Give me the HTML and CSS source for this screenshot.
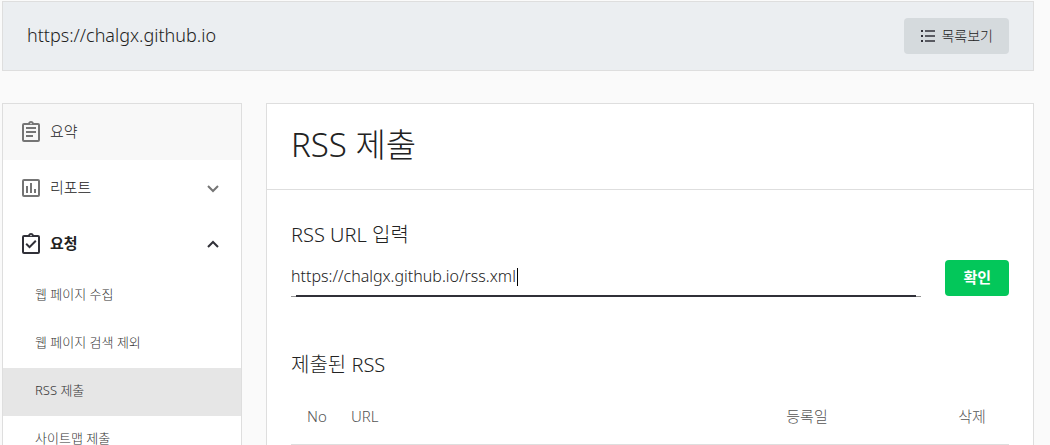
FILE: index.html
```html
<!DOCTYPE html>
<html lang="ko">
<head>
<meta charset="utf-8">
<meta name="viewport" content="width=device-width, initial-scale=1">
<title>RSS 제출</title>
<link rel="stylesheet" href="styles.css">
</head>
<body>
<div class="page">
  <header class="site-bar">
    <span class="site-name">https://chalgx.github.io</span>
    <button class="list-button" type="button">
      <svg class="list-icon" viewBox="0 0 16 16" aria-hidden="true"><path class="dots" d="M1 3h2M1 8h2M1 13h2"/><path d="M5 3h10M5 8h10M5 13h10"/></svg>
      <span>목록보기</span>
    </button>
  </header>
  <div class="columns">
    <nav class="sidebar" aria-label="메뉴">
      <a class="menu-item shaded" href="#summary">
        <svg class="menu-icon" viewBox="0 0 24 24" aria-hidden="true"><path d="M7 15h7v2H7zm0-4h10v2H7zm0-4h10v2H7zm12-4h-4.180C14.400 1.840 13.300 1 12 1s-2.400.840-2.820 2H5a2 2 0 0 0-2 2v15a2 2 0 0 0 2 2h14a2 2 0 0 0 2-2V5a2 2 0 0 0-2-2zm-7-.250a.750.750 0 1 1 0 1.500.750.750 0 0 1 0-1.500zM19 20H5V5h14z"/></svg>
        <span class="menu-label">요약</span>
      </a>
      <a class="menu-item" href="#report">
        <svg class="menu-icon" viewBox="0 0 24 24" aria-hidden="true"><path d="M7 10h2v7H7zm4-3h2v10h-2zm4 6h2v4h-2zM19 3H5a2 2 0 0 0-2 2v14a2 2 0 0 0 2 2h14a2 2 0 0 0 2-2V5a2 2 0 0 0-2-2zm0 16H5V5h14z"/></svg>
        <span class="menu-label">리포트</span>
        <svg class="chevron" viewBox="0 0 16 16" aria-hidden="true"><path d="M3 6l5 5 5-5"/></svg>
      </a>
      <a class="menu-item open" href="#request">
        <svg class="menu-icon" viewBox="0 0 24 24" aria-hidden="true"><path d="M19 3h-4.180C14.400 1.840 13.300 1 12 1s-2.400.840-2.820 2H5a2 2 0 0 0-2 2v15a2 2 0 0 0 2 2h14a2 2 0 0 0 2-2V5a2 2 0 0 0-2-2zm-7-.250a.750.750 0 1 1 0 1.500.750.750 0 0 1 0-1.500zM19 20H5V5h14zM17.500 9.500l-1.400-1.400-5.600 5.600-2.600-2.600-1.400 1.400 4 4z"/></svg>
        <span class="menu-label">요청</span>
        <svg class="chevron" viewBox="0 0 16 16" aria-hidden="true"><path d="M3 11l5-5 5 5"/></svg>
      </a>
      <a class="sub-item" href="#crawl">웹 페이지 수집</a>
      <a class="sub-item" href="#exclude">웹 페이지 검색 제외</a>
      <a class="sub-item current" href="#rss" aria-current="page">RSS 제출</a>
      <a class="sub-item" href="#sitemap">사이트맵 제출</a>
    </nav>
    <main class="panel">
      <h1 class="panel-title">RSS 제출</h1>
      <div class="panel-body">
        <form class="rss-form">
          <label class="section-title" for="rss-url">RSS URL 입력</label>
          <div class="input-row">
            <div class="field">
              <input class="url-input" id="rss-url" type="text" value="https://chalgx.github.io/rss.xml">
              <span class="caret"></span>
            </div>
            <button class="submit-button" type="button">확인</button>
          </div>
        </form>
        <h2 class="section-title">제출된 RSS</h2>
        <table class="rss-table">
          <thead>
            <tr><th class="col-no">No</th><th class="col-url">URL</th><th class="col-date">등록일</th><th class="col-delete">삭제</th></tr>
          </thead>
        </table>
      </div>
    </main>
  </div>
</div>
</body>
</html>
```
FILE: styles.css
```css
* {
  box-sizing: border-box;
}

html {
  scrollbar-width: none;
}

body {
  margin: 0;
  background: #fafafa;
  color: #222;
  font: 300 14px/20px "Noto Sans", "Noto Sans CJK KR", sans-serif;
}

a {
  color: inherit;
  text-decoration: none;
}

button,
input {
  font: inherit;
  color: inherit;
}

.page {
  padding: 1px 16px 0 2px;
}

.site-bar {
  display: flex;
  align-items: center;
  justify-content: space-between;
  padding: 16px 24px;
  border: 1px solid #dedede;
  background: #ebeef1;
}

.site-name {
  padding-bottom: 2px;
  font-size: 18px;
  line-height: 24px;
}

.list-button {
  display: flex;
  align-items: center;
  gap: 5px;
  height: 36px;
  padding: 0 16px;
  border: 0;
  border-radius: 4px;
  background: #d5dadd;
}

.list-icon {
  width: 16px;
  height: 16px;
  fill: none;
  stroke: #303038;
  stroke-width: 1.5;
}

.dots {
  stroke-width: 2;
}

.columns {
  display: flex;
  gap: 24px;
  margin-top: 32px;
}

.sidebar {
  flex: 0 0 240px;
  border: 1px solid #dedede;
  background: #fff;
}

.menu-item {
  display: flex;
  align-items: center;
  height: 56px;
  padding: 0 20px 0 16px;
  font-size: 15px;
}

.menu-label {
  padding-bottom: 2px;
}

.menu-icon {
  width: 24px;
  height: 24px;
  margin-right: 7px;
  fill: #757575;
}

.chevron {
  width: 16px;
  height: 16px;
  margin-left: auto;
  fill: none;
  stroke: #757575;
  stroke-width: 2;
}

.shaded {
  background: #f8f8f8;
}

.open {
  font-weight: 700;
}

.open .menu-icon {
  fill: #303038;
}

.open .chevron {
  stroke: #303038;
}

.sub-item {
  display: flex;
  align-items: center;
  height: 48px;
  padding: 0 32px 4px;
  color: #333;
  font-size: 13px;
}

.current {
  background: #e6e6e6;
}

.panel {
  flex: 1;
  border: 1px solid #dedede;
  background: #fff;
}

.panel-title {
  margin: 0;
  padding: 17px 24px 20px;
  border-bottom: 1px solid #dedede;
  font-size: 33px;
  font-weight: 300;
  line-height: 48px;
}

.panel-body {
  padding: 31px 24px;
}

.section-title {
  display: block;
  margin: 0;
  font-size: 20px;
  font-weight: 300;
  line-height: 28px;
}

.input-row {
  display: flex;
  align-items: center;
  gap: 24px;
  margin: 9px 0 54px;
}

.field {
  position: relative;
  flex: 1;
  border-bottom: 1px solid #949494;
}

.field::after {
  position: absolute;
  right: 5px;
  bottom: -1px;
  left: 5px;
  height: 2px;
  background: #303038;
  content: "";
}

.url-input {
  display: block;
  width: 100%;
  height: 38px;
  padding: 0 0 2px;
  border: 0;
  outline: 0;
  background: transparent;
  font-size: 16px;
}

.caret {
  position: absolute;
  top: 10px;
  left: 226px;
  width: 1px;
  height: 18px;
  background: #000;
}

.submit-button {
  height: 36px;
  padding: 0 18px 2px;
  border: 0;
  border-radius: 4px;
  background: #03c75a;
  color: #fff;
  font-size: 15px;
  font-weight: 700;
}

.rss-table {
  width: 100%;
  margin-top: 9px;
  border-collapse: collapse;
  table-layout: fixed;
  color: #555;
}

.rss-table th {
  height: 56px;
  padding: 0;
  border-bottom: 1px solid #dedede;
  font-size: 15px;
  font-weight: 300;
}

.rss-table .col-no {
  width: 52px;
}

.rss-table .col-url {
  padding-left: 8px;
  text-align: left;
}

.rss-table .col-date {
  width: 256px;
}

.rss-table .col-delete {
  width: 74px;
}
```
